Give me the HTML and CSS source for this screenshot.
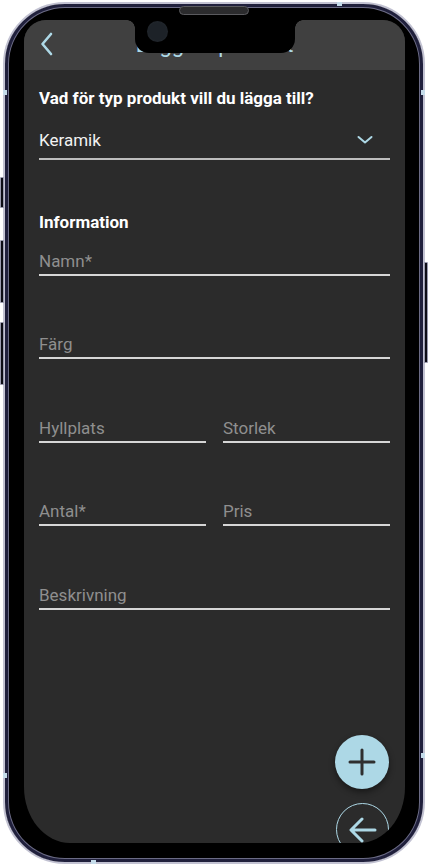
FILE: index.html
```html
<!DOCTYPE html>
<html lang="sv">
<head>
<meta charset="utf-8">
<title>Lägg till produkt</title>
<link rel="stylesheet" href="styles.css">
</head>
<body>
<div class="phone">
  <span class="side side-silent"></span>
  <span class="side side-volup"></span>
  <span class="side side-voldown"></span>
  <span class="side side-power"></span>
  <span class="band band-top"></span>
  <span class="band band-lt"></span>
  <span class="band band-rt"></span>
  <span class="band band-lb"></span>
  <span class="band band-rb"></span>
  <span class="band band-bottom"></span>
  <div class="speaker"></div>
  <div class="screen">
    <div class="notch"><span class="cam"></span></div>
    <header class="appbar">
      <svg class="back" width="13" height="24" viewBox="0 0 13 24"><path d="M11 2 L2.5 12 L11 22" fill="none" stroke="#add8e6" stroke-width="2.6" stroke-linecap="round" stroke-linejoin="round"/></svg>
      <h1 class="title">Lägg till produkt</h1>
      <span></span>
    </header>
    <main class="content">
      <p class="question">Vad för typ produkt vill du lägga till?</p>
      <div class="select">
        <span>Keramik</span>
        <svg class="chev" width="16" height="10" viewBox="0 0 16 10"><path d="M1.5 2 L8 7.5 L14.5 2" fill="none" stroke="#add8e6" stroke-width="2" stroke-linecap="round" stroke-linejoin="round"/></svg>
      </div>
      <h2 class="section">Information</h2>
      <div class="fields">
        <div class="field">Namn*</div>
        <div class="field">Färg</div>
        <div class="row">
          <div class="field">Hyllplats</div>
          <div class="field">Storlek</div>
        </div>
        <div class="row">
          <div class="field">Antal*</div>
          <div class="field">Pris</div>
        </div>
        <div class="field">Beskrivning</div>
      </div>
    </main>
    <button class="fab" aria-label="Lägg till">
      <svg width="28" height="28" viewBox="0 0 28 28"><path d="M14 2 V26 M2 14 H26" stroke="#2f2f2f" stroke-width="3" stroke-linecap="round"/></svg>
    </button>
    <button class="fab-back" aria-label="Tillbaka">
      <svg width="30" height="26" viewBox="0 0 30 26"><path d="M27 13 H4 M14 2 L3 13 L14 24" fill="none" stroke="#add8e6" stroke-width="3" stroke-linecap="round" stroke-linejoin="round"/></svg>
    </button>
  </div>
</div>
</body>
</html>
```

FILE: styles.css
```css
* { box-sizing: border-box; }

html, body {
  margin: 0;
  padding: 0;
  background: #ffffff;
  width: 428px;
  height: 866px;
  overflow: hidden;
}

body {
  font-family: Roboto, "Noto Sans", "Liberation Sans", sans-serif;
}

.phone {
  position: relative;
  width: 422px;
  height: 862px;
  margin: 2px 0 0 3px;
  background: #000;
  border: 2px solid #c2c2d2;
  border-radius: 62px;
  box-shadow: inset 0 0 0 3px #20203c, inset 0 0 0 4px #6b6b85;
  padding: 16px 18px 19px 19px;
  display: flex;
}

.side {
  position: absolute;
  width: 4px;
  background: #0c0c14;
  border: 1px solid #9a9aae;
  border-radius: 1px;
}
.side-silent { left: -5px; top: 173px; height: 31px; }
.side-volup { left: -5px; top: 236px; height: 63px; }
.side-voldown { left: -5px; top: 318px; height: 63px; }
.side-power { right: -5px; top: 258px; height: 101px; }

.band {
  position: absolute;
  background: #c5dcea;
}
.band-top { top: -2px; left: 332px; width: 5px; height: 4px; }
.band-lt { left: -2px; top: 86px; width: 4px; height: 5px; }
.band-rt { right: -2px; top: 86px; width: 4px; height: 5px; }
.band-lb { left: -2px; top: 769px; width: 4px; height: 5px; }
.band-rb { right: -2px; top: 749px; width: 4px; height: 5px; }
.band-bottom { bottom: -2px; left: 86px; width: 5px; height: 4px; }

.speaker {
  position: absolute;
  left: 174px;
  top: 2px;
  width: 70px;
  height: 9px;
  border-radius: 5px;
  background: #2b2b2d;
  border: 1px solid #5a5a5e;
  z-index: 3;
}

.screen {
  position: relative;
  flex: 1;
  display: flex;
  flex-direction: column;
  background: #2b2b2b;
  border-radius: 22px 22px 46px 46px / 22px 22px 56px 56px;
  overflow: hidden;
}

.notch {
  position: absolute;
  left: 111px;
  top: 0;
  width: 160px;
  height: 33px;
  background: #000;
  border-radius: 0 0 14px 14px;
  z-index: 2;
}
.notch::before,
.notch::after {
  content: "";
  position: absolute;
  top: 0;
  width: 8px;
  height: 8px;
}
.notch::before {
  left: -8px;
  background: radial-gradient(circle at 0 100%, transparent 7.5px, #000 8px);
}
.notch::after {
  right: -8px;
  background: radial-gradient(circle at 100% 100%, transparent 7.5px, #000 8px);
}
.cam {
  position: absolute;
  left: 12px;
  top: 1px;
  width: 21px;
  height: 21px;
  border-radius: 50%;
  background: radial-gradient(circle at 50% 50%, #1d2228 0, #1d2228 55%, #262b31 100%);
}

.appbar {
  height: 50px;
  flex: none;
  background: #404040;
  display: grid;
  grid-template-columns: 1fr auto 1fr;
  align-items: center;
  padding: 0 16px;
}
.back { display: block; margin-top: -2px; }
.title {
  margin: 0;
  font-weight: 400;
  font-size: 22px;
  line-height: 26px;
  color: #add8e6;
}

.content {
  flex: 1;
  padding: 18px 15px 0 15px;
  display: flex;
  flex-direction: column;
}

.question {
  margin: 0;
  font-size: 17px;
  line-height: 20px;
  font-weight: 700;
  color: #ffffff;
}

.select {
  margin-top: 22px;
  display: flex;
  align-items: center;
  justify-content: space-between;
  font-size: 17px;
  line-height: 20px;
  color: #f2f2f2;
  padding: 0 17px 8px 0;
  border-bottom: 2px solid #bdbdbd;
}

.section {
  margin: 52px 0 0 0;
  font-size: 17px;
  line-height: 20px;
  font-weight: 700;
  color: #ffffff;
}

.fields {
  margin-top: 19px;
  display: flex;
  flex-direction: column;
  gap: 58.4px;
}

.row {
  display: grid;
  grid-template-columns: 1fr 1fr;
  column-gap: 17px;
}

.field {
  font-size: 17px;
  line-height: 20px;
  color: #8f8f8f;
  padding-bottom: 3px;
  border-bottom: 2px solid #d6d6d6;
}

.fab {
  position: absolute;
  left: 311px;
  top: 715px;
  width: 54px;
  height: 54px;
  border: none;
  border-radius: 50%;
  background: #add8e6;
  display: flex;
  align-items: center;
  justify-content: center;
  padding: 0;
  box-shadow: 0 3px 6px rgba(0, 0, 0, 0.45);
}

.fab-back {
  position: absolute;
  left: 312px;
  top: 783px;
  width: 53px;
  height: 53px;
  border: 1.5px solid #add8e6;
  border-radius: 50%;
  background: transparent;
  display: flex;
  align-items: center;
  justify-content: center;
  padding: 0;
}
```
